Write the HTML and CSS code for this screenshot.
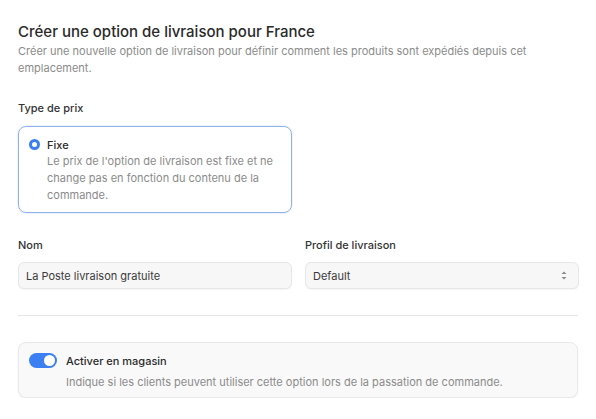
FILE: index.html
```html
<!DOCTYPE html>
<html lang="fr">
<head>
<meta charset="utf-8">
<link rel="stylesheet" href="styles.css">
</head>
<body>
<main class="page">
  <header class="head">
    <h1 class="title">Créer une option de livraison pour France</h1>
    <p class="subtitle">Créer une nouvelle option de livraison pour définir comment les produits sont expédiés depuis cet emplacement.</p>
  </header>

  <section class="price">
    <div class="label">Type de prix</div>
    <div class="radio-card">
      <span class="radio"><span class="radio-dot"></span></span>
      <div class="radio-text">
        <div class="radio-title">Fixe</div>
        <div class="radio-desc">Le prix de l'option de livraison est fixe et ne change pas en fonction du contenu de la commande.</div>
      </div>
    </div>
  </section>

  <section class="fields">
    <div class="field">
      <div class="label">Nom</div>
      <div class="input">La Poste livraison gratuite</div>
    </div>
    <div class="field">
      <div class="label">Profil de livraison</div>
      <div class="input select">
        <span>Default</span>
        <svg class="chev" width="8" height="11" viewBox="0 0 8 11"><path d="M1.5 4 L4 1.5 L6.5 4 Z" fill="#8a8a8a"/><path d="M1.5 7 L4 9.5 L6.5 7 Z" fill="#8a8a8a"/></svg>
      </div>
    </div>
  </section>

  <hr class="divider">

  <section class="toggle-card">
    <span class="toggle"><span class="knob"></span></span>
    <div class="toggle-text">
      <div class="toggle-title">Activer en magasin</div>
      <div class="toggle-desc">Indique si les clients peuvent utiliser cette option lors de la passation de commande.</div>
    </div>
  </section>
</main>
</body>
</html>
```

FILE: styles.css
```css
* { box-sizing: border-box; }
html, body { margin: 0; padding: 0; background: #ffffff; }
body {
  font-family: Inter, "Noto Sans", "Liberation Sans", sans-serif;
  color: #2b2b2b;
  -webkit-font-smoothing: antialiased;
}
.page {
  width: 596px;
  padding: 22px 18px 0 18px;
}
.head { display: flex; flex-direction: column; }
.title {
  margin: 0;
  font-size: 15px;
  font-weight: 500;
  line-height: 20px;
  color: #2a2a2a;
}
.subtitle {
  margin: 0;
  margin-top: 1px;
  font-size: 11px;
  line-height: 17px;
  color: #8b8b8b;
  max-width: 520px;
}
.price { margin-top: 23px; }
.label {
  font-size: 11px;
  font-weight: 500;
  color: #333333;
  line-height: 16px;
}
.radio-card {
  margin-top: 10px;
  width: 274px;
  height: 87px;
  border: 1px solid #8fb1ee;
  border-radius: 8px;
  display: flex;
  gap: 7px;
  padding: 10px 12px 0 10px;
  box-shadow: 0 0 0 1px rgba(143,177,238,0.15);
}
.radio {
  flex: none;
  width: 11px;
  height: 11px;
  margin-top: 2px;
  border-radius: 50%;
  background: #3b7ff2;
  display: flex;
  align-items: center;
  justify-content: center;
}
.radio-dot {
  width: 5px;
  height: 5px;
  border-radius: 50%;
  background: #ffffff;
}
.radio-text { display: flex; flex-direction: column; }
.radio-title {
  font-size: 11px;
  font-weight: 500;
  line-height: 16px;
  color: #2b2b2b;
}
.radio-desc {
  font-size: 11px;
  line-height: 16.8px;
  color: #8b8b8b;
  max-width: 232px;
}
.fields {
  margin-top: 24px;
  display: grid;
  grid-template-columns: 274px 274px;
  column-gap: 13px;
}
.field { display: flex; flex-direction: column; gap: 9px; }
.input {
  height: 27px;
  background: #f7f7f7;
  border: 1px solid #e7e7e7;
  border-radius: 6px;
  padding: 0 7px;
  display: flex;
  align-items: center;
  font-size: 11px;
  color: #3a3a3a;
  box-shadow: 0 1px 1px rgba(0,0,0,0.04);
}
.select { justify-content: space-between; }
.chev { margin-right: 3px; }
.divider {
  margin: 26px 0 0 0;
  border: 0;
  border-top: 1px solid #e6e6e6;
  height: 0;
}
.toggle-card {
  margin-top: 26px;
  height: 56px;
  background: #f9f9f9;
  border: 1px solid #e9e9e9;
  border-radius: 8px;
  display: flex;
  gap: 9px;
  padding: 10px 10px 0 10px;
  box-shadow: 0 1px 2px rgba(0,0,0,0.05);
}
.toggle {
  flex: none;
  width: 28px;
  height: 15px;
  border-radius: 8px;
  background: #3b7ff2;
  display: flex;
  align-items: center;
  justify-content: flex-end;
  padding: 0 2px;
}
.knob {
  width: 11px;
  height: 11px;
  border-radius: 50%;
  background: #ffffff;
}
.toggle-text { display: flex; flex-direction: column; gap: 5px; }
.toggle-title {
  font-size: 11px;
  font-weight: 500;
  line-height: 16px;
  color: #2b2b2b;
}
.toggle-desc {
  font-size: 11px;
  line-height: 16px;
  color: #8b8b8b;
}
```
